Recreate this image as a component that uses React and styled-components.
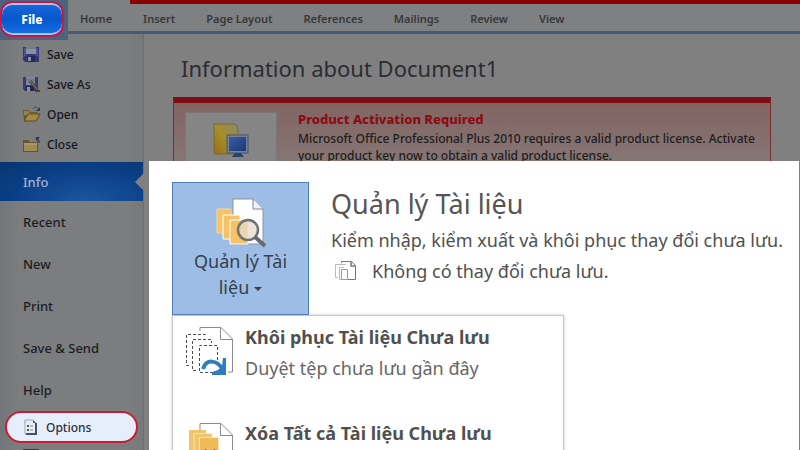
import { useState } from "react";
import styled, { createGlobalStyle } from "styled-components";

const tabs = ["Home", "Insert", "Page Layout", "References", "Mailings", "Review", "View"];
const sections = ["Recent", "New", "Print", "Save & Send", "Help"];

function SaveIcon() {
    return (
        <svg width="16" height="16" viewBox="0 0 16 16" aria-hidden="true">
            <path d="M0 1h16v15H2l-2-2z" fill="#33367a" />
            <path d="M1 2h2v8H1zM13 2h2v8h-2z" fill="#4d50a0" />
            <rect x="3" y="1" width="10" height="7" fill="#8c929c" />
            <rect x="3" y="1" width="10" height="2" fill="#757b8b" />
            <rect x="4" y="10" width="8" height="6" fill="#252754" />
            <rect x="5" y="11" width="3" height="4" fill="#8d929c" />
        </svg>
    );
}

function SaveAsIcon() {
    return (
        <svg width="18" height="16" viewBox="0 0 18 16" aria-hidden="true">
            <path d="M0 1h15v14H2l-2-2z" fill="#36397a" />
            <rect x="3" y="1" width="9" height="8" fill="#858a96" />
            <path d="M3 3h9M3 5h9" stroke="#686e7c" />
            <rect x="3" y="10" width="8" height="5" fill="#242850" />
            <rect x="4" y="11" width="3" height="4" fill="#8d929c" />
            <path d="M7 5l7 8" stroke="#4a463e" strokeWidth="3" />
            <path d="M7 5l7 8" stroke="#8b8069" strokeWidth="1" />
            <path d="M12 15h5" stroke="#524225" strokeWidth="2" />
        </svg>
    );
}

function OpenIcon() {
    return (
        <svg width="18" height="16" viewBox="0 0 18 16" aria-hidden="true">
            <path d="M0 4h5l2 2h7v9H1z" fill="#6d5930" />
            <path d="M1 5h4l2 2h6v2H1z" fill="#93845b" />
            <path d="M1 15l4-7h12l-4 7z" fill="#a58a41" stroke="#5e4b22" strokeWidth="1" />
            <path d="M10 3c2-3 4-2 6 0" fill="none" stroke="#424b59" strokeWidth="1" />
            <path d="M17 1v4h-4z" fill="#353f4e" />
        </svg>
    );
}

function CloseIcon() {
    return (
        <svg width="18" height="16" viewBox="0 0 18 16" aria-hidden="true">
            <path d="M0 4h5l2 2h8v10H0z" fill="#66522c" />
            <path d="M1 7h13v8H1z" fill="#a18b50" />
            <path d="M1 7h13v2H1z" fill="#a79870" />
            <path d="M13 1h4L15 3l2 3-1 1-2-3-1 1z" fill="#2d3546" />
        </svg>
    );
}

function OptionsIcon() {
    return (
        <svg width="14" height="16" viewBox="0 0 14 16" aria-hidden="true">
            <path d="M1 1h8l3 3v11H1z" fill="#e8eef2" stroke="#9aa7b0" />
            <path d="M12 4v11H2" fill="none" stroke="#42535e" strokeWidth="2" />
            <path d="M9 1v3h3z" fill="#5b6972" />
            <path d="M3 6h2v2H3zM3 10h2v2H3z" fill="#445763" />
            <path d="M6 7h3M6 11h3" stroke="#7c8e99" />
        </svg>
    );
}

function ExitIcon() {
    return (
        <svg width="16" height="16" viewBox="0 0 16 16" aria-hidden="true">
            <rect width="16" height="16" rx="1" fill="#5f2628" />
            <path d="M4 4l8 8M12 4l-8 8" stroke="#999" strokeWidth="2" />
        </svg>
    );
}

function ProductIcon() {
    return (
        <svg width="36" height="35" viewBox="0 0 36 35" aria-hidden="true">
            <defs>
                <linearGradient id="gold" x1="1" y1="0" x2="0" y2="1">
                    <stop offset="0" stopColor="#8a886b" />
                    <stop offset=".5" stopColor="#a58f28" />
                    <stop offset="1" stopColor="#9c6c12" />
                </linearGradient>
                <linearGradient id="screen" x1="0" y1="0" x2="1" y2="1">
                    <stop offset="0" stopColor="#3c5f9e" />
                    <stop offset="1" stopColor="#16377c" />
                </linearGradient>
            </defs>
            <path d="M1 1h19q5 0 5 6v24H1z" fill="url(#gold)" stroke="#746a3c" />
            <rect x="14" y="12" width="21" height="18" fill="#748196" stroke="#46546d" />
            <rect x="16" y="14" width="17" height="14" fill="url(#screen)" />
            <path d="M22 30h6l3 4H19z" fill="#27436f" />
        </svg>
    );
}

function ManageIcon() {
    return (
        <svg width="52" height="50" viewBox="0 0 52 50" aria-hidden="true">
            <path d="M18 1h20l10 10v35H18z" fill="#fff" stroke="#8b95a1" />
            <path d="M38 1v10h10" fill="#eef2f7" stroke="#7b8794" />
            <path d="M2 11h14v24H2z" fill="#f6c266" stroke="#f9d798" />
            <path d="M8 17h17v24H8z" fill="#f6c266" stroke="#fff" />
            <path d="M15 22h18v24H15z" fill="#f6c266" stroke="#fff" />
            <circle cx="33" cy="32" r="10" fill="#e3dccb" fillOpacity=".75" stroke="#6f7277" strokeWidth="2.5" />
            <path d="M40 39l10 9" stroke="#666b72" strokeWidth="4" />
        </svg>
    );
}

function VersionsIcon() {
    return (
        <svg width="22" height="20" viewBox="0 0 22 20" aria-hidden="true">
            <path d="M6.500 2V.5h10l4 4v14H13" fill="none" stroke="#777" />
            <path d="M16 1v4h4" fill="none" stroke="#777" strokeWidth="1.500" />
            <path d="M3 16.500H.5v-13H11M6 18.500H4.500v-12H9" fill="none" stroke="#bbb" />
            <path d="M6.500 8.500h6v10h-6z" fill="none" stroke="#999" />
        </svg>
    );
}

function RecoverIcon() {
    return (
        <svg width="50" height="50" viewBox="0 0 50 50" aria-hidden="true">
            <path d="M15 4V.5h21L47.500 12v33H43" fill="none" stroke="#8b8b8b" />
            <path d="M35.500 1v11.500H47" fill="none" stroke="#8b8b8b" />
            <g fill="none" stroke="#4d4d4d" strokeDasharray="3 2">
                <path d="M4 38.500H1.500v-31H20.500V10" />
                <path d="M11 43.500H7.500v-31H26.500V16" />
                <path d="M28 45.500H14.500v-27H32.500V33" />
            </g>
            <path d="M18 42c3-10 14-10 20 1" fill="none" stroke="#2e7ebf" strokeWidth="4" />
            <path d="M41 31v17H27v-3l6-2 4-4 1-8z" fill="#2e7ebf" />
        </svg>
    );
}

function DeleteIcon() {
    return (
        <svg width="50" height="50" viewBox="0 0 50 50" aria-hidden="true">
            <path d="M15 8V.5h21L47.500 12v36H30" fill="none" stroke="#8b8b8b" />
            <path d="M35.500 1v11.500H47" fill="none" stroke="#8b8b8b" />
            <path d="M4 7h17v31H4z" fill="#f2c36d" />
            <path d="M9 10.500h18v32H9z" fill="#f2c36d" stroke="#fbe6bd" />
            <path d="M14.500 14.500h19v32h-19z" fill="#f0b95a" stroke="#fbe6bd" />
            <path d="M19 27l12 14M31 27L19 41" stroke="#d9532c" strokeWidth="4" />
        </svg>
    );
}

const fileCommands = [
    { label: "Save", Icon: SaveIcon },
    { label: "Save As", Icon: SaveAsIcon },
    { label: "Open", Icon: OpenIcon },
    { label: "Close", Icon: CloseIcon },
];

function App() {
    const [current, setCurrent] = useState("Info");

    return (
        <>
            <GlobalStyle />
            <Page>
                <Ribbon>
                    <FileBack>
                        <FileButton type="button">File</FileButton>
                    </FileBack>
                    <Tabs>
                        {tabs.map((tab) => (
                            <Tab key={tab} type="button">{tab}</Tab>
                        ))}
                    </Tabs>
                </Ribbon>

                <Body>
                    <Sidebar>
                        <Commands>
                            {fileCommands.map(({ label, Icon }) => (
                                <Command key={label} type="button">
                                    <IconSlot><Icon /></IconSlot>
                                    {label}
                                </Command>
                            ))}
                        </Commands>
                        <InfoItem type="button" onClick={() => setCurrent("Info")}>Info</InfoItem>
                        {sections.map((name) => (
                            <Section key={name} type="button" $active={current === name} onClick={() => setCurrent(name)}>
                                {name}
                            </Section>
                        ))}
                        <OptionsButton type="button">
                            <OptionsIcon />
                            Options
                        </OptionsButton>
                        <ExitButton type="button" aria-label="Exit"><ExitIcon /></ExitButton>
                    </Sidebar>

                    <Main>
                        <Title>Information about Document1</Title>
                        <Notice>
                            <NoticeIcon><ProductIcon /></NoticeIcon>
                            <div>
                                <NoticeTitle>Product Activation Required</NoticeTitle>
                                <NoticeText>
                                    Microsoft Office Professional Plus 2010 requires a valid product license. Activate<br />
                                    your product key now to obtain a valid product license.
                                </NoticeText>
                            </div>
                        </Notice>
                    </Main>
                </Body>

                <Panel>
                    <PanelTop>
                        <ManageButton type="button" aria-haspopup="menu">
                            <ManageIcon />
                            <span>Quản lý Tài<br />liệu<Caret /></span>
                        </ManageButton>
                        <Summary>
                            <PanelTitle>Quản lý Tài liệu</PanelTitle>
                            <PanelText>Kiểm nhập, kiểm xuất và khôi phục thay đổi chưa lưu.</PanelText>
                            <Status><VersionsIcon />Không có thay đổi chưa lưu.</Status>
                        </Summary>
                    </PanelTop>
                    <Menu>
                        <MenuItem type="button">
                            <RecoverIcon />
                            <span>
                                <strong>Khôi phục Tài liệu Chưa lưu</strong>
                                Duyệt tệp chưa lưu gần đây
                            </span>
                        </MenuItem>
                        <MenuItem type="button">
                            <DeleteIcon />
                            <span>
                                <strong>Xóa Tất cả Tài liệu Chưa lưu</strong>
                            </span>
                        </MenuItem>
                    </Menu>
                </Panel>
            </Page>
        </>
    );
}

const GlobalStyle = createGlobalStyle`
    *{
        box-sizing: border-box;
    }
    body{
        margin: 0;
        font-family: "Noto Sans", "Open Sans", sans-serif;
    }
    button{
        margin: 0;
        padding: 0;
        border: none;
        background: none;
        font-family: inherit;
        text-align: left;
        cursor: pointer;
    }
    h1, h2, h3, p{
        margin: 0;
        font-weight: 400;
    }
    svg{
        display: block;
        flex-shrink: 0;
    }
`

const Page = styled.div`
    position: relative;
    display: flex;
    flex-direction: column;
    height: 100vh;
    overflow: hidden;
    background: #808080;
`

const Ribbon = styled.header`
    position: relative;
    z-index: 1;
    display: flex;
    flex-shrink: 0;
    height: 34px;
    border-bottom: 3px solid #465b78;
    background: linear-gradient(#8b0000, #8b0000) 130px 0 / 100% 4px no-repeat #7f8081;
`

const FileBack = styled.div`
    flex-shrink: 0;
    width: 68px;
    height: 40px;
    padding-top: 1px;
    background: #4b647f;
`

const FileButton = styled.button`
    width: 64px;
    height: 36px;
    border: 2px solid #c8174b;
    border-radius: 12px;
    box-shadow: inset 0 2px #a9c4f2, inset 0 -2px #a9c4f2;
    background: linear-gradient(#1b68d8, #0757cd 50%, #1271e3);
    color: #fff;
    font-size: 12px;
    font-weight: 800;
    text-align: center;
`

const Tabs = styled.nav`
    display: flex;
    gap: 31px;
    height: 31px;
    padding: 6px 0 0 12px;
`

const Tab = styled.button`
    color: #36383a;
    font-size: 11px;
    font-weight: 600;
    line-height: 25px;
    white-space: nowrap;
`

const Body = styled.div`
    display: flex;
    flex: 1;
    min-height: 0;
`

const Sidebar = styled.nav`
    display: flex;
    flex-direction: column;
    flex-shrink: 0;
    width: 144px;
    border-right: 1px solid #6c6e70;
    background: linear-gradient(90deg, #737678, #7b7d7f 20px, #7b7d7f 130px, #76787a);
`

const Commands = styled.div`
    display: flex;
    flex-direction: column;
    padding: 5px 0 3px;
`

const Command = styled.button`
    display: flex;
    align-items: center;
    gap: 6px;
    height: 30px;
    padding-left: 23px;
    color: #16181a;
    font-size: 12px;
    font-weight: 500;
`

const IconSlot = styled.span`
    width: 18px;
`

const Section = styled.button`
    flex-shrink: 0;
    height: 42px;
    padding-left: 23px;
    color: ${(props) => (props.$active ? "#0a3f86" : "#1b1d1f")};
    font-size: 13px;
    font-weight: 500;
`

const InfoItem = styled(Section)`
    position: relative;
    height: 39px;
    background: radial-gradient(ellipse at 60% 100%, #1b569e, #0a3f86 60%, #08356f);
    color: #a4b4cc;

    /* notch that points at the open section */
    &::after{
        content: "";
        position: absolute;
        top: 11px;
        right: -1px;
        border: 9px solid transparent;
        border-right-color: #808080;
        border-left-width: 0;
    }
`

const OptionsButton = styled.button`
    display: flex;
    flex-shrink: 0;
    align-items: center;
    gap: 8px;
    height: 32px;
    margin: 0 5px;
    padding-left: 17px;
    border: 2px solid #c81c30;
    border-radius: 16px;
    background: #e6eefb;
    color: #2b3137;
    font-size: 12px;
    font-weight: 500;
`

const ExitButton = styled.button`
    flex-shrink: 0;
    padding: 6px 0 0 23px;
`

const Main = styled.main`
    flex: 1;
    min-width: 0;
    padding: 18px 29px 0 29px;
`

const Title = styled.h1`
    padding-left: 8px;
    color: #2b2d30;
    font-size: 22px;
    line-height: 32px;
`

const Notice = styled.section`
    display: flex;
    gap: 21px;
    height: 140px;
    margin-top: 13px;
    padding: 7px 12px 0 11px;
    border: 1px solid #7e2a2e;
    border-top: 6px solid #7d0f14;
    background: linear-gradient(#826462, #857775 60px);
`

const NoticeIcon = styled.div`
    display: flex;
    flex-shrink: 0;
    justify-content: center;
    width: 92px;
    height: 100px;
    margin-top: 2px;
    padding-top: 10px;
    border: 1px solid #7b7778;
    background: #858585;
`

const NoticeTitle = styled.h2`
    color: #8c0a12;
    font-size: 13px;
    font-weight: 800;
    line-height: 18px;
`

const NoticeText = styled.p`
    padding-top: 2px;
    color: #1e1c1d;
    font-size: 12px;
    font-weight: 500;
    line-height: 17px;
    white-space: nowrap;
`

const Panel = styled.section`
    position: absolute;
    z-index: 1;
    top: 161px;
    right: 1px;
    bottom: 0;
    left: 149px;
    overflow: hidden;
    padding: 21px 0 0 23px;
    background: #fff;
`

const PanelTop = styled.div`
    display: flex;
    gap: 22px;
`

const ManageButton = styled.button`
    display: flex;
    flex-direction: column;
    flex-shrink: 0;
    align-items: center;
    width: 137px;
    height: 133px;
    padding-top: 15px;
    border: 1px solid #4d7fbb;
    background: #9dbde6;
    color: #36414e;
    font-size: 18px;
    line-height: 26px;

    span{
        text-align: center;
    }
`

const Caret = styled.i`
    display: inline-block;
    margin-left: 5px;
    border: 4px solid transparent;
    border-top-color: #36414e;
    border-bottom-width: 0;
    vertical-align: middle;
`

const Summary = styled.div`
    color: #505050;
`

const PanelTitle = styled.h2`
    color: #555;
    font-size: 27px;
    line-height: 44px;
`

const PanelText = styled.p`
    font-size: 18px;
    line-height: 28px;
    white-space: nowrap;
`

const Status = styled.p`
    display: flex;
    align-items: center;
    gap: 15px;
    padding-left: 4px;
    font-size: 18px;
    line-height: 34px;
`

const Menu = styled.div`
    display: flex;
    flex-direction: column;
    width: 392px;
    border: 1px solid #c6c6c6;
    border-bottom: none;
    box-shadow: 0 0 3px #ccc;
`

const MenuItem = styled.button`
    display: flex;
    gap: 10px;
    height: 96px;
    padding: 11px 0 0 12px;
    color: #666;
    font-size: 18px;
    line-height: 31px;
    white-space: nowrap;

    strong{
        display: block;
        margin-top: -5px;
        color: #505050;
        font-weight: 700;
    }
`

export default App;
